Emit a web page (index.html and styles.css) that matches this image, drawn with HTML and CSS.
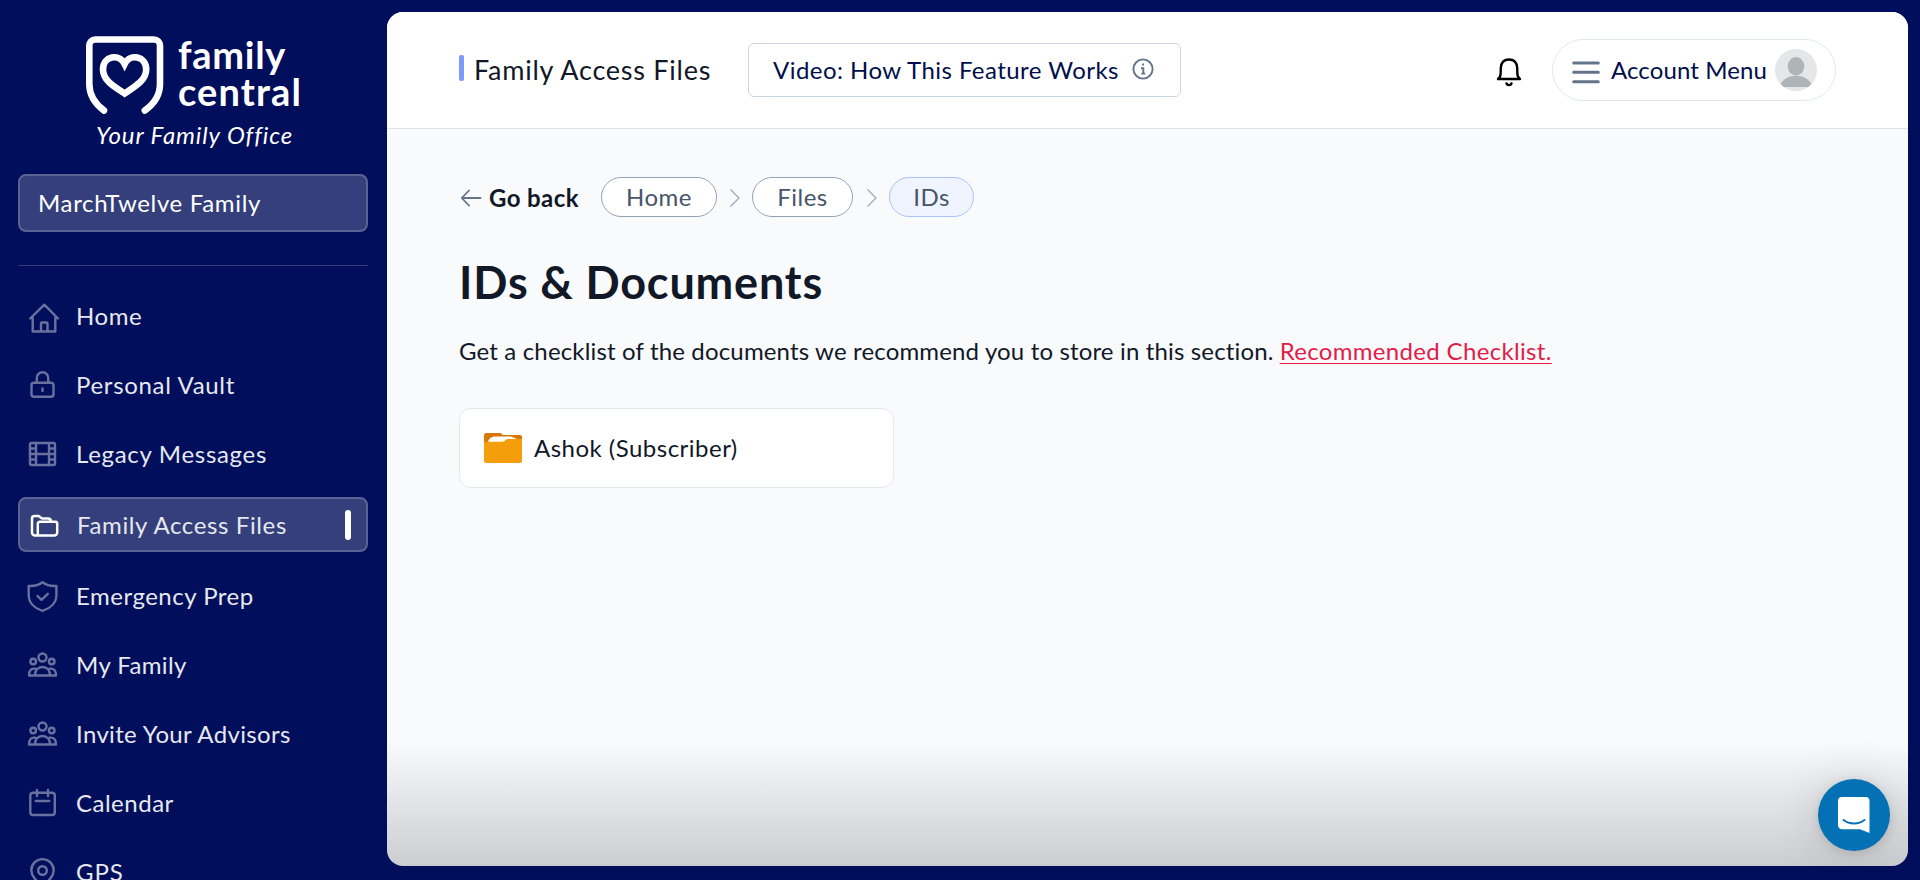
FILE: index.html
```html
<!DOCTYPE html>
<html lang="en">
<head>
<meta charset="utf-8">
<title>IDs &amp; Documents</title>
<link rel="stylesheet" href="styles.css">
</head>
<body>
<div class="app">
  <aside class="sidebar">
    <div class="brand">
      <div class="brand-row">
        <svg class="brand-mark" width="78" height="78" viewBox="0 0 78 78" fill="none" stroke="#fff" stroke-width="6.6" stroke-linecap="round" stroke-linejoin="round">
          <path d="M18 74.500C8 67 3.300 58 3.300 48V9.500a6 6 0 0 1 6-6H68a6 6 0 0 1 6 6V48c0 10-4.700 19-15.200 26.500"/>
          <path stroke-linejoin="miter" d="M38.600 57.500C27 50 17 44 17 33.500C17 20 33 17 38.600 28C44 17 60.200 20 60.200 33.500C60.200 44 50 50 38.600 57.500Z"/>
        </svg>
        <div class="brand-name"><span class="b1">family</span><span class="b2">central</span></div>
      </div>
      <div class="tagline">Your Family Office</div>
    </div>
    <div class="family">MarchTwelve Family</div>
    <nav class="nav">
      <a class="item"><svg class="ico" viewBox="0 0 34 34"><path d="M4.200 19.500 18.300 5.700 32 19.500M6.700 18v14.500h22.600V18M15 32V24.500a1 1 0 0 1 1-1h4.500a1 1 0 0 1 1 1V32"/></svg><span class="n1">Home</span></a>
      <a class="item"><svg class="ico" viewBox="0 0 34 34"><rect x="5.500" y="14.800" width="22" height="14" rx="2.500"/><path d="M10.800 14.500V10a5.700 5.700 0 0 1 11.400 0v4.500M16.500 20.500v2.500"/></svg><span class="n2">Personal Vault</span></a>
      <a class="item"><svg class="ico" viewBox="0 0 34 34"><rect x="4" y="6" width="25" height="22" rx="1.500"/><path d="M10 6v22M23 6v22M10 17h13M4 11.500h6M4 17h6M4 22.500h6M23 11.500h6M23 17h6M23 22.500h6"/></svg><span class="n3">Legacy Messages</span></a>
      <a class="item active"><svg class="ico" viewBox="0 0 34 34"><path d="M10.500 27.500H8a3 3 0 0 1-3-3V10.500a2.500 2.500 0 0 1 2.500-2.500H11.500c1.500 0 2 2.500 4 2.500H21c2 0 3 1.200 3 3.200M13 13.700h15.200a2 2 0 0 1 2 2V24.500a3 3 0 0 1-3 3H10.800V16a2.300 2.300 0 0 1 2.200-2.300Z"/></svg><span class="n4">Family Access Files</span><i class="marker"></i></a>
      <a class="item"><svg class="ico" viewBox="0 0 34 34"><path d="M16.500 3.200C12.500 6.400 7.500 7.300 2.700 7v9c0 8 6 13.500 13.800 15.800C24.300 29.500 30.400 24 30.400 16V7C25.500 7.300 20.500 6.400 16.500 3.200ZM11.500 17l4 3.800 6.300-6"/></svg><span class="n5">Emergency Prep</span></a>
      <a class="item"><svg class="ico" viewBox="0 0 34 34"><circle cx="16.500" cy="9.500" r="4"/><circle cx="7.200" cy="13.500" r="2.800"/><circle cx="25.700" cy="13.500" r="2.800"/><path d="M9 27.500c0-5.500 3-8.500 7.500-8.500s7.500 3 7.500 8.500M9.500 20.700C5 20 3 22.500 3 27.500h27c0-5-2-7.500-6.500-6.800"/></svg><span class="n6">My Family</span></a>
      <a class="item"><svg class="ico" viewBox="0 0 34 34"><circle cx="16.500" cy="9.500" r="4"/><circle cx="7.200" cy="13.500" r="2.800"/><circle cx="25.700" cy="13.500" r="2.800"/><path d="M9 27.500c0-5.500 3-8.500 7.500-8.500s7.500 3 7.500 8.500M9.500 20.700C5 20 3 22.500 3 27.500h27c0-5-2-7.500-6.500-6.800"/></svg><span class="n7">Invite Your Advisors</span></a>
      <a class="item"><svg class="ico" viewBox="0 0 34 34"><rect x="4.300" y="6.800" width="24.500" height="22.200" rx="2.800"/><path d="M11 4v6M22 4v6M9.800 15h13.500"/></svg><span class="n8">Calendar</span></a>
      <a class="item"><svg class="ico" viewBox="0 0 34 34"><path d="M16.500 31.500C10 25.500 5.300 21 5.300 15.300a11.200 11.200 0 0 1 22.400 0C27.700 21 23 25.500 16.500 31.500Z"/><circle cx="16.500" cy="15.500" r="4.300"/></svg><span class="n9">GPS</span></a>
    </nav>
  </aside>
  <main class="main">
    <header class="top">
      <i class="bar"></i>
      <h2 class="section">Family Access Files</h2>
      <button class="video"><span>Video: How This Feature Works</span>
        <svg width="22" height="22" viewBox="0 0 22 22" fill="none" stroke="#64748b" stroke-width="1.900"><circle cx="11" cy="11" r="9.600"/><path d="M9 10.200h2.300v5M9.300 15.600h4M11 5.500v2"/></svg>
      </button>
      <svg class="bell" width="26" height="30" viewBox="0 0 26 30" fill="none" stroke="#000" stroke-width="2.400" stroke-linecap="round" stroke-linejoin="round"><path d="M2 22h22c-1.800-1.200-2.500-2.500-2.600-5L21.200 11c-.3-5.500-3.300-8.500-8.200-8.500S5.100 5.500 4.800 11L4.600 17C4.500 19.500 3.800 20.800 2 22Z"/><path d="M10.500 26.500a2.600 2.200 0 0 0 5 0"/></svg>
      <div class="account">
        <svg width="28" height="24" viewBox="0 0 28 24" stroke="#64748b" stroke-width="3" stroke-linecap="round"><path d="M1.700 3h24.600M1.700 12.300h24.600M1.700 21.700h24.600"/></svg>
        <span>Account Menu</span>
        <svg class="avatar" width="42" height="42" viewBox="0 0 42 42"><circle cx="21" cy="21" r="21" fill="#e4e6e7"/><ellipse cx="21" cy="17.300" rx="8.300" ry="9.200" fill="#aeb4b7"/><path fill="#aeb4b7" d="M5.700 35C8 30 14 26.700 21 26.700S34 30 36.300 35L33.500 38H8.500Z"/></svg>
      </div>
    </header>
    <section class="content">
      <div class="crumbs">
        <svg width="22" height="18" viewBox="0 0 22 18" fill="none" stroke="#64748b" stroke-width="1.800" stroke-linecap="round" stroke-linejoin="round"><path d="M20.500 9H1.800M9 1.500 1.800 9 9 16.500"/></svg>
        <b class="back">Go back</b>
        <span class="pill home">Home</span>
        <svg class="chev" width="12" height="20" viewBox="0 0 12 20"><path d="M1.500 1.500 10 10 1.500 18.500"/></svg>
        <span class="pill files">Files</span>
        <svg class="chev" width="12" height="20" viewBox="0 0 12 20"><path d="M1.500 1.500 10 10 1.500 18.500"/></svg>
        <span class="pill ids">IDs</span>
      </div>
      <h1 class="title">IDs &amp; Documents</h1>
      <p class="lead"><span class="lead-text">Get a checklist of the documents we recommend you to store in this section.</span><a class="link">Recommended Checklist.</a></p>
      <div class="card">
        <svg width="38" height="30" viewBox="0 0 38 30"><path fill="#d97706" d="M2.500 0H16c1.500 0 2 2 3.500 2H36a2 2 0 0 1 2 2v10H0V2.500A2.500 2.500 0 0 1 2.500 0Z"/><path fill="#fff" d="M4 9C5 5 8 3.600 12 3.600H27L33 6 20 10H4Z"/><path fill="#f59e0b" d="M0 8.700h19c2 0 2.500-2.700 5-2.700H38V27.500a2.500 2.500 0 0 1-2.500 2.500h-33A2.500 2.500 0 0 1 0 27.500Z"/></svg>
        <span>Ashok (Subscriber)</span>
      </div>
    </section>
  </main>
  <button class="chat"><svg width="34" height="38" viewBox="0 0 34 38"><path fill="#fff" d="M5 1H28.500A4 4 0 0 1 32.500 5V37L23 33.200H5A4 4 0 0 1 1 29V5A4 4 0 0 1 5 1Z"/><path fill="none" stroke="#0371b3" stroke-width="2" stroke-linecap="round" d="M6.500 24c6 4.600 15 4.600 21 0"/></svg></button>
</div>
</body>
</html>
```
FILE: styles.css
```css
* { box-sizing: border-box; }
body { margin: 0; font-family: Lato, "Open Sans", sans-serif; font-size: 24px; line-height: 32px; color: #111827; font-variant-ligatures: none; }
span, a { white-space: nowrap; }
svg { flex: none; display: block; }
.app { display: flex; height: 880px; overflow: hidden; background: #000e5b; }
.sidebar { width: 387px; flex: none; padding: 36px 19px 0 18px; color: #fff; }
.brand { height: 138px; padding-left: 68px; }
.brand-row { display: flex; gap: 14px; height: 78px; }
.brand-name { display: flex; flex-direction: column; font-weight: 700; font-size: 38px; line-height: 37px; }
.b1 { letter-spacing: .7px; }
.b2 { letter-spacing: 1.1px; }
.tagline { padding-left: 10px; padding-top: 5px; font-style: italic; font-size: 24px; letter-spacing: .9px; white-space: nowrap; }
.family { height: 58px; border: 2px solid #5a6393; border-radius: 8px; background: #343f7b; display: flex; align-items: center; padding-left: 18px; letter-spacing: .65px; }
.nav { margin-top: 33px; padding-top: 15px; border-top: 1px solid #333e7c; color: #e6e8ef; }
.item { display: flex; align-items: center; height: 69px; padding-left: 8px; gap: 16px; }
.n1 { letter-spacing: .6px; }
.n2 { letter-spacing: .68px; }
.n3 { letter-spacing: .7px; }
.n4 { letter-spacing: .62px; }
.n5 { letter-spacing: .5px; }
.n6 { letter-spacing: .4px; }
.n7 { letter-spacing: .35px; }
.n8 { letter-spacing: .5px; }
.n9 { letter-spacing: .9px; }
.ico { width: 34px; height: 34px; fill: none; stroke: #69729f; stroke-width: 2.4; stroke-linejoin: round; stroke-linecap: round; }
.active { height: 55px; margin: 9px 0; padding-left: 7px; border: 2px solid #5a6393; border-radius: 8px; background: #343f7b; }
.active .ico { stroke: #fff; stroke-width: 2.500; }
.marker { width: 6px; height: 30px; border-radius: 3px; background: #fff; margin-left: auto; margin-right: 15px; }
.main { width: 1521px; height: 854px; margin-top: 12px; flex: none; border-radius: 16px; overflow: hidden; background: linear-gradient(to bottom, rgba(204,204,209,0) 730px, #cccdd1 854px), #f8fafc; }
.top { height: 117px; background: #fff; border-bottom: 1px solid #dde4ee; display: flex; align-items: center; padding: 0 72px; }
.bar { width: 5px; height: 26px; border-radius: 2px; background: #7c9aff; margin-right: 10px; margin-bottom: 5px; }
.section { margin: 0; font-size: 27px; font-weight: 400; width: 274px; letter-spacing: .75px; white-space: nowrap; }
.video { font: inherit; color: #000e4b; height: 54px; width: 433px; border: 1px solid #cbd5e1; border-radius: 6px; background: #fff; display: flex; align-items: center; padding: 0 26px 0 24px; justify-content: space-between; letter-spacing: .45px; }
.video svg { margin-bottom: 3px; }
.bell { margin-left: auto; margin-top: 4px; }
.account { margin-left: 30px; width: 284px; height: 62px; border: 1px solid #e2e8f0; border-radius: 31px; display: flex; align-items: center; padding: 0 18px 0 19px; color: #000e4b; letter-spacing: .1px; }
.account svg:first-child { margin-top: 3px; }
.account span { margin-left: 11px; }
.avatar { margin-left: auto; }
.content { padding: 48px 72px 0; }
.crumbs { display: flex; align-items: center; height: 40px; color: #475569; }
.crumbs > svg:first-child { margin: 2px 0 0 1px; }
.back { margin-left: 7px; width: 112px; color: #111827; letter-spacing: .4px; padding-top: 1px; }
.pill { height: 40px; border: 1px solid #94a3b8; border-radius: 20px; background: #fff; display: flex; align-items: center; justify-content: center; letter-spacing: .5px; }
.home { width: 116px; }
.files { width: 101px; }
.ids { width: 85px; background: #eff4ff; border-color: #a9c4fd; }
.chev { margin: 1px 11px 0 12px; fill: none; stroke: #94a3b8; stroke-width: 1.100; }
.files + .chev { margin-left: 13px; }
.title { margin: 37px 0 0; font-size: 45px; line-height: 56px; font-weight: 700; letter-spacing: .83px; }
.lead { margin: 25px 0 0; display: flex; gap: 6px; }
.lead-text { letter-spacing: .155px; }
.link { color: #e11d48; text-decoration: underline; text-decoration-thickness: 1px; text-underline-offset: 3px; letter-spacing: .33px; }
.card { margin-top: 41px; width: 435px; height: 80px; border: 1px solid #e2e8f0; border-radius: 12px; background: #fff; display: flex; align-items: center; padding-left: 24px; gap: 12px; letter-spacing: .48px; }
.chat { position: absolute; left: 1818px; top: 779px; width: 72px; height: 72px; border: 0; border-radius: 50%; background: #0371b3; display: flex; align-items: center; justify-content: center; box-shadow: 0 2px 10px rgba(0,0,0,.12), 0 3px 48px rgba(0,0,0,.15); }
```
